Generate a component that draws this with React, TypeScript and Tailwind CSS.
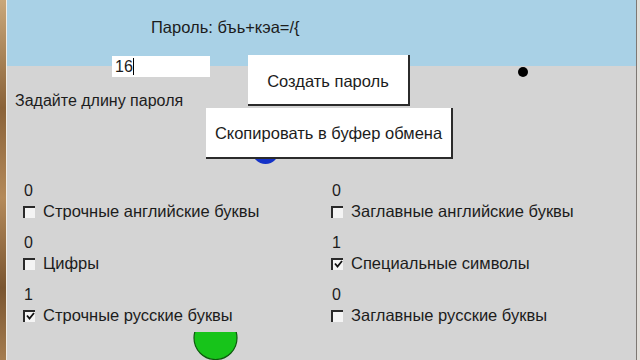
import React from 'react';

type Option = { count: number; label: string; checked: boolean };

const LEFT: Option[] = [
  { count: 0, label: 'Строчные английские буквы', checked: false },
  { count: 0, label: 'Цифры', checked: false },
  { count: 1, label: 'Строчные русские буквы', checked: true },
];

const RIGHT: Option[] = [
  { count: 0, label: 'Заглавные английские буквы', checked: false },
  { count: 1, label: 'Специальные символы', checked: true },
  { count: 0, label: 'Заглавные русские буквы', checked: false },
];

function CheckBox({ checked }: { checked: boolean }) {
  return (
    <span className="w-[12px] h-[12px] shrink-0 border-t-2 border-l-2 border-[#2a2a2a] bg-[#f4f4f4] flex items-center justify-center">
      {checked && (
        <svg width="9" height="9" viewBox="0 0 9 9">
          <path d="M1 3.5 L3.5 6.5 L8 1" fill="none" stroke="#111" strokeWidth="1.8" />
        </svg>
      )}
    </span>
  );
}

function OptionColumn({ items }: { items: Option[] }) {
  return (
    <div className="flex flex-col gap-[14px]">
      {items.map((o) => (
        <div key={o.label} className="flex flex-col">
          <span className="text-[16px] leading-[17px] pl-[1px]">{o.count}</span>
          <label className="flex items-center gap-[8px] mt-[4px] leading-[17px]">
            <CheckBox checked={o.checked} />
            <span className="text-[16.5px]">{o.label}</span>
          </label>
        </div>
      ))}
    </div>
  );
}

export default function App() {
  return (
    <div className="w-[640px] h-[360px] flex overflow-hidden text-[#1c1c1c] font-['Liberation_Sans',Arial,sans-serif]">
      {/* wooden desktop peeking at the left edge */}
      <div className="w-[6px] h-full bg-[linear-gradient(to_bottom,#c9a77a,#8a6238_30%,#b48a5a_55%,#7a5530_80%,#a57d50)]" />
      <div className="w-[1px] h-full bg-[#f1ece4]" />

      <div className="relative flex-1 h-full bg-[linear-gradient(to_bottom,#a9d1e6_66px,#d4d4d4_66px)]">
        <div className="pt-[17px] pl-[144px] text-[16.5px] leading-[20px]">Пароль: бъь+кэа=/{'{'}</div>

        <div className="flex items-start mt-[18px]">
          <div className="w-[241px] h-[51px] flex flex-col">
            <div className="ml-[105px] mt-[1px] w-[98px] h-[21px] bg-white flex items-center pl-[3px] text-[16px]">
              16<span className="w-[1px] h-[17px] bg-black" />
            </div>
            <div className="ml-[8px] mt-[14px] text-[16px] leading-[20px]">Задайте длину пароля</div>
          </div>
          <button className="w-[162px] h-[51px] bg-white border-r-2 border-b-2 border-[#2b2b2b] text-[16.5px] pt-[3px]">
            Создать пароль
          </button>
        </div>

        <div className="relative mt-[2px] ml-[199px] w-[247px] h-[51px]">
          <div className="absolute left-[46px] top-[29px] w-[27px] h-[27px] rounded-full bg-[#1432c8]" />
          <button className="relative w-full h-full bg-white border-r-2 border-b-2 border-[#2b2b2b] text-[16.5px] pt-[1px]">
            Скопировать в буфер обмена
          </button>
        </div>

        <div className="grid grid-cols-[308px_1fr] pl-[16px] mt-[23px]">
          <OptionColumn items={LEFT} />
          <OptionColumn items={RIGHT} />
        </div>

        {/* black dot */}
        <div className="absolute left-[511px] top-[67px] w-[10px] h-[10px] rounded-full bg-black" />

        {/* green ball, top cut off */}
        <svg className="absolute left-[186px] top-[332px]" width="46" height="28" viewBox="0 0 46 28">
          <circle cx="22.5" cy="6" r="21.5" fill="#17c41a" stroke="#0c5a0c" strokeWidth="1.2" />
        </svg>
      </div>

      <div className="w-[1px] h-full bg-[#7d7873]" />
      <div className="w-[3px] h-full bg-[#e3dfda]" />
    </div>
  );
}
